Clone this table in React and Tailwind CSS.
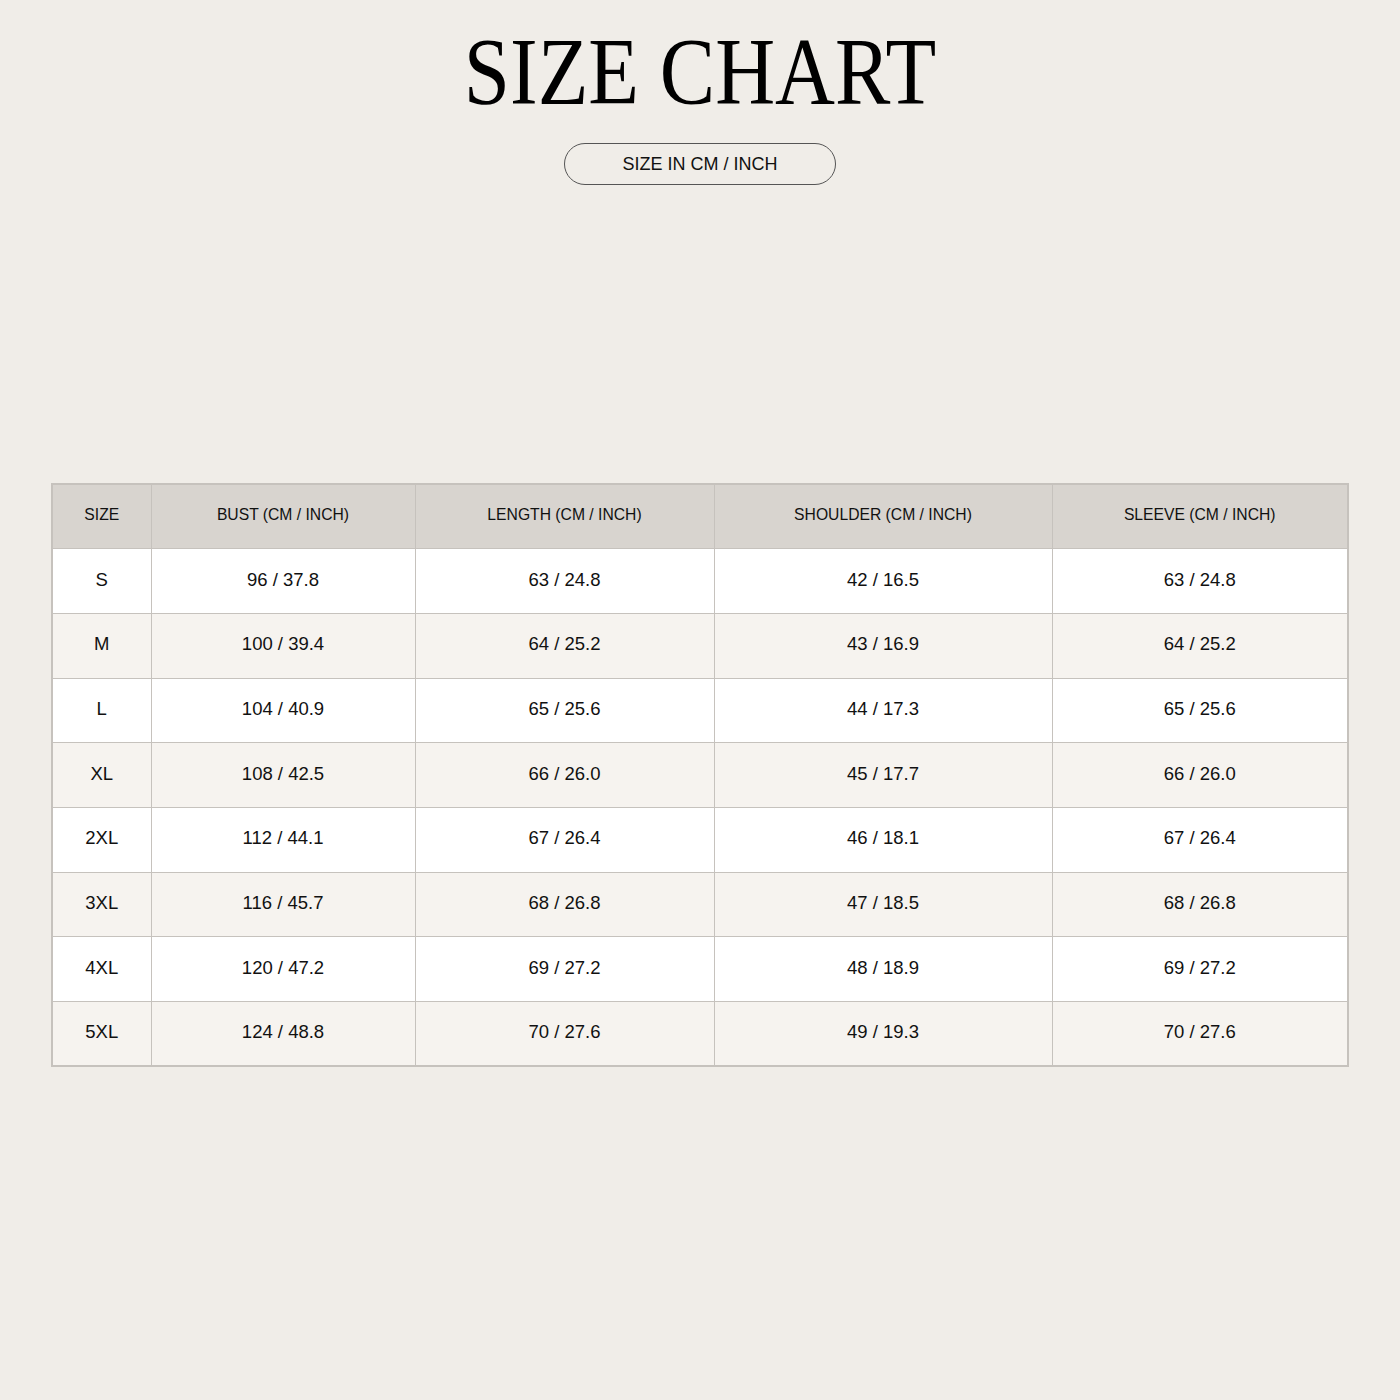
import React from 'react';

const headers = ['SIZE', 'BUST (CM / INCH)', 'LENGTH (CM / INCH)', 'SHOULDER (CM / INCH)', 'SLEEVE (CM / INCH)'];

const rows = [
  ['S', '96 / 37.8', '63 / 24.8', '42 / 16.5', '63 / 24.8'],
  ['M', '100 / 39.4', '64 / 25.2', '43 / 16.9', '64 / 25.2'],
  ['L', '104 / 40.9', '65 / 25.6', '44 / 17.3', '65 / 25.6'],
  ['XL', '108 / 42.5', '66 / 26.0', '45 / 17.7', '66 / 26.0'],
  ['2XL', '112 / 44.1', '67 / 26.4', '46 / 18.1', '67 / 26.4'],
  ['3XL', '116 / 45.7', '68 / 26.8', '47 / 18.5', '68 / 26.8'],
  ['4XL', '120 / 47.2', '69 / 27.2', '48 / 18.9', '69 / 27.2'],
  ['5XL', '124 / 48.8', '70 / 27.6', '49 / 19.3', '70 / 27.6'],
];

const colWidths = ['w-[99px]', 'w-[264px]', 'w-[299px]', 'w-[338px]', 'w-[296px]'];

export default function App() {
  return (
    <div className="w-[1400px] h-[1400px] bg-[#f0ede8] flex flex-col items-center pt-[27px] font-['Liberation_Sans',Arial,sans-serif] text-[#111]">
      <h1 className="font-['Liberation_Serif','Times_New_Roman',serif] text-[83px] leading-[90px] scale-y-[1.14] text-black">
        SIZE CHART
      </h1>
      <div className="mt-[26px] w-[272px] h-[42px] rounded-full border border-[#555] flex items-center justify-center text-[18px]">
        SIZE IN CM / INCH
      </div>

      <table className="mt-[298px] w-[1296px] table-fixed border-collapse border-2 border-[#c6c2bd]">
        <colgroup>
          {colWidths.map((w, i) => (
            <col key={i} className={w} />
          ))}
        </colgroup>
        <thead>
          <tr className="bg-[#d8d4cf] h-[64.7px]">
            {headers.map((h) => (
              <th key={h} className="border border-[#c6c2bd] font-normal text-[15.7px] text-center pb-[3px]">
                {h}
              </th>
            ))}
          </tr>
        </thead>
        <tbody>
          {rows.map((r, i) => (
            <tr key={r[0]} className={`h-[64.7px] ${i % 2 === 0 ? 'bg-white' : 'bg-[#f6f3ef]'}`}>
              {r.map((c, j) => (
                <td key={j} className="border border-[#c6c2bd] text-[18.5px] text-center pb-[3px]">
                  {c}
                </td>
              ))}
            </tr>
          ))}
        </tbody>
      </table>
    </div>
  );
}
